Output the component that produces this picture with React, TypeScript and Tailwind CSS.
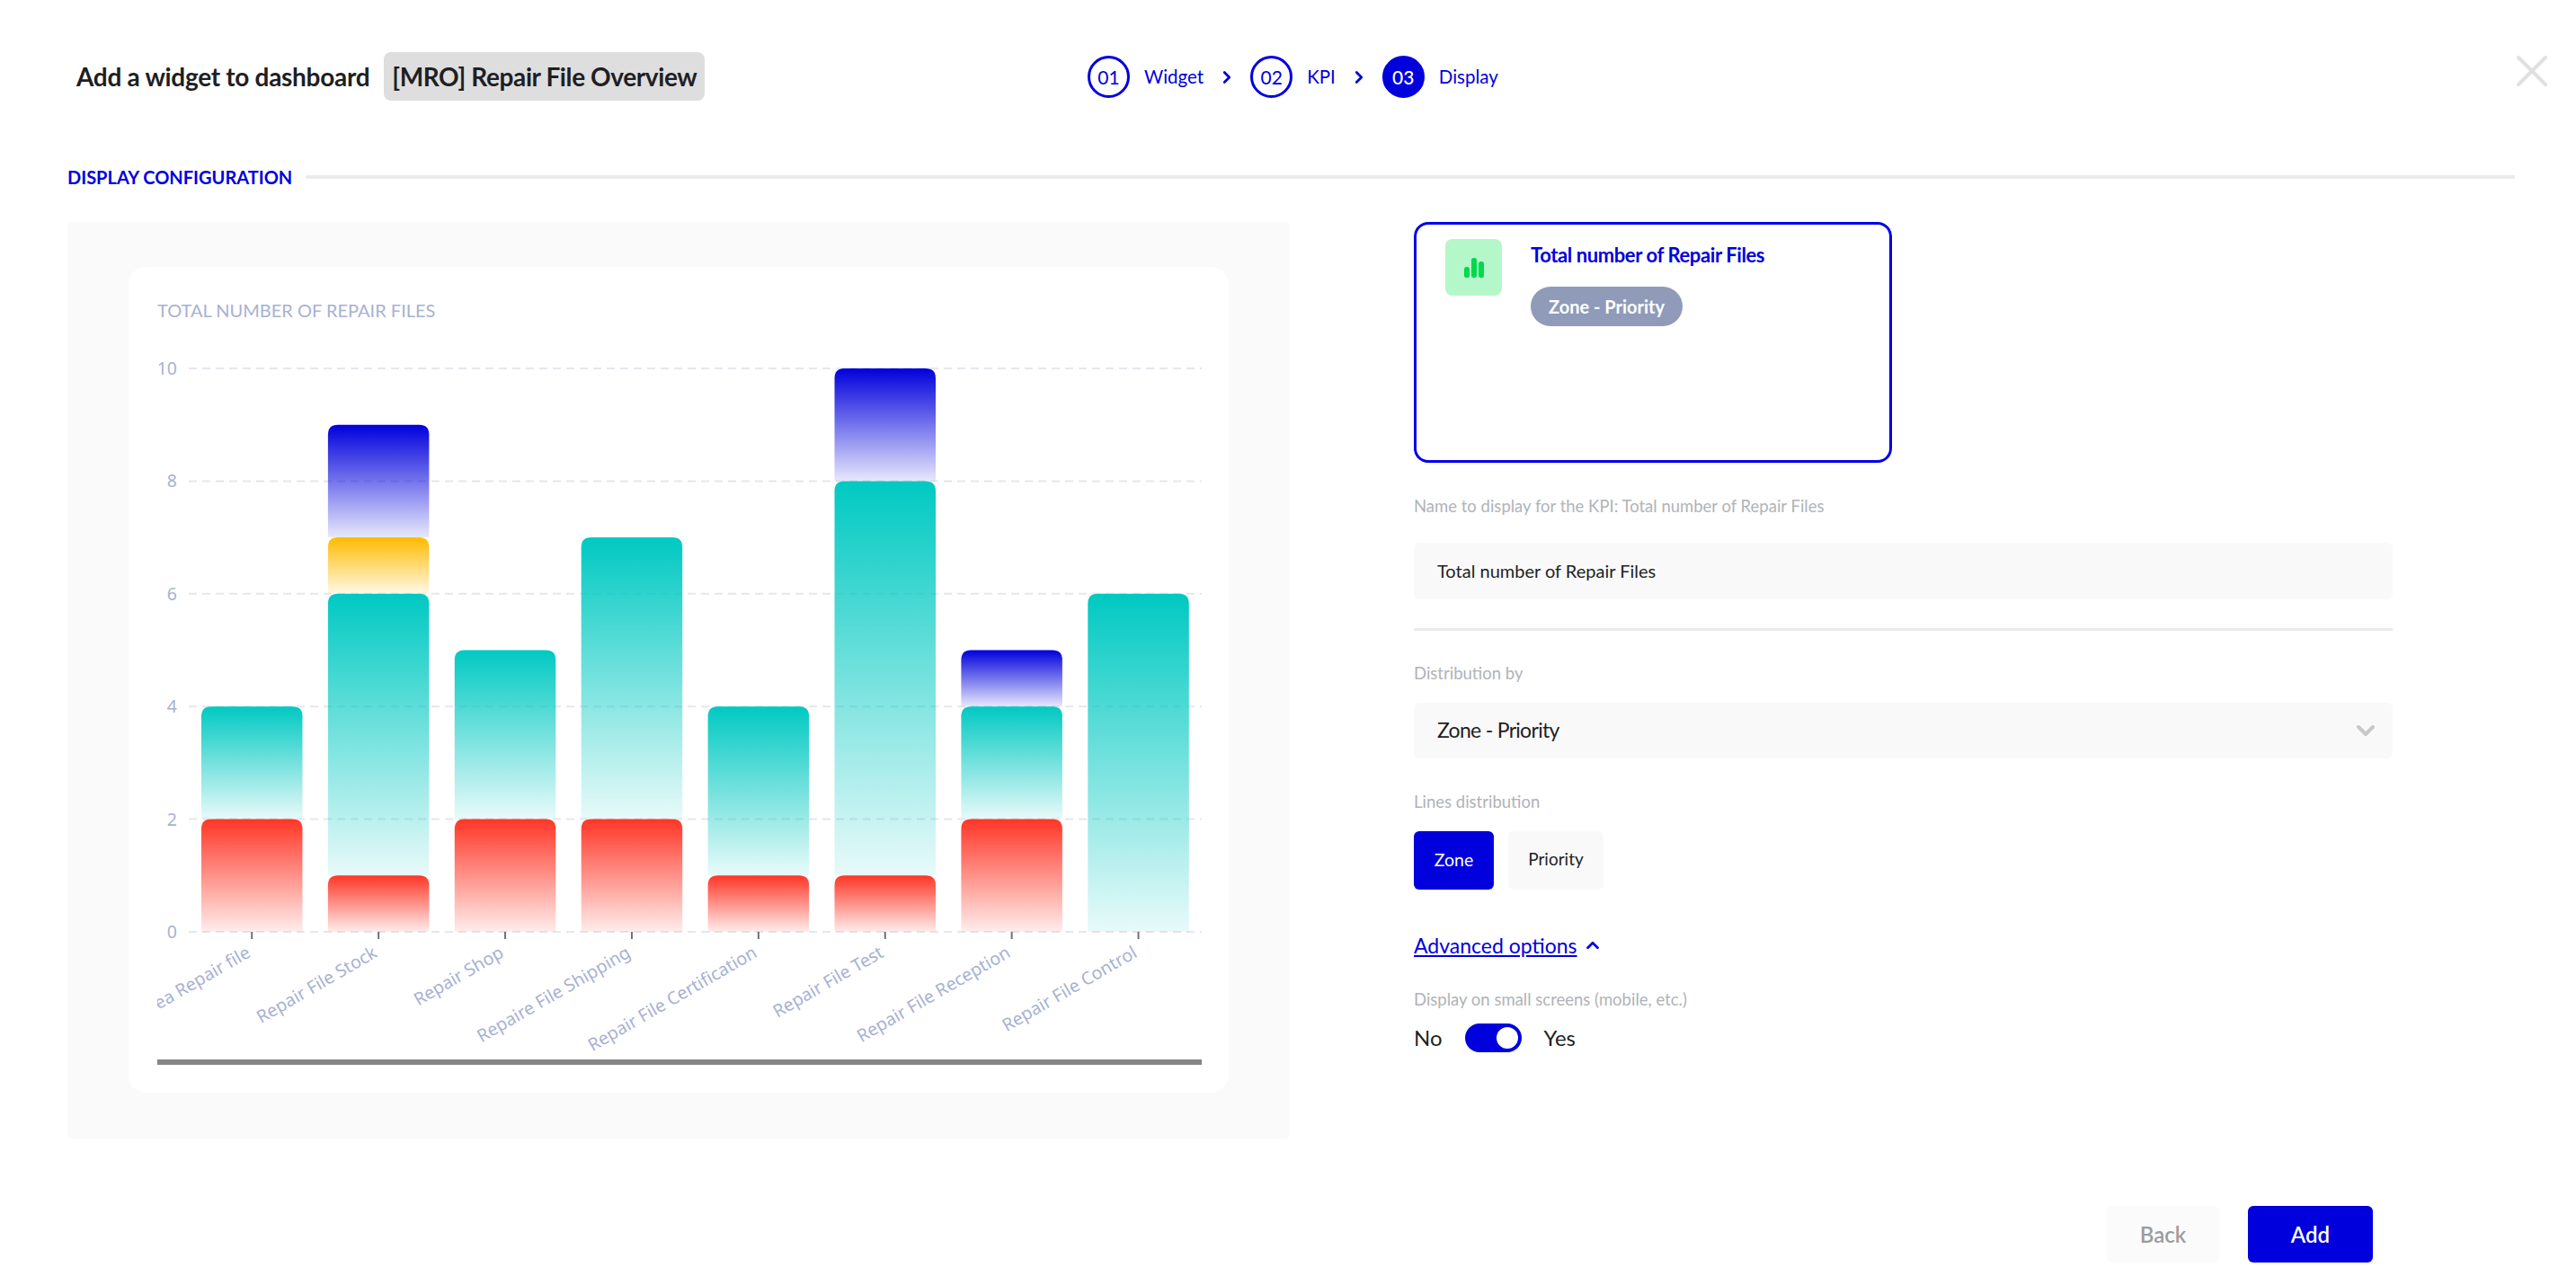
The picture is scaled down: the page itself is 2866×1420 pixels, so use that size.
import { ChevronDown, ChevronRight, ChevronUp, X } from "lucide-react";

type Segment = { color: "red" | "teal" | "yellow" | "blue"; from: number; to: number };

const BARS: { label: string; segments: Segment[] }[] = [
  { label: "Area Repair file", segments: [{ color: "red", from: 0, to: 2 }, { color: "teal", from: 2, to: 4 }] },
  {
    label: "Repair File Stock",
    segments: [
      { color: "red", from: 0, to: 1 },
      { color: "teal", from: 1, to: 6 },
      { color: "yellow", from: 6, to: 7 },
      { color: "blue", from: 7, to: 9 },
    ],
  },
  { label: "Repair Shop", segments: [{ color: "red", from: 0, to: 2 }, { color: "teal", from: 2, to: 5 }] },
  { label: "Repaire File Shipping", segments: [{ color: "red", from: 0, to: 2 }, { color: "teal", from: 2, to: 7 }] },
  { label: "Repair File Certification", segments: [{ color: "red", from: 0, to: 1 }, { color: "teal", from: 1, to: 4 }] },
  {
    label: "Repair File Test",
    segments: [
      { color: "red", from: 0, to: 1 },
      { color: "teal", from: 1, to: 8 },
      { color: "blue", from: 8, to: 10 },
    ],
  },
  {
    label: "Repair File Reception",
    segments: [
      { color: "red", from: 0, to: 2 },
      { color: "teal", from: 2, to: 4 },
      { color: "blue", from: 4, to: 5 },
    ],
  },
  { label: "Repair File Control", segments: [{ color: "teal", from: 0, to: 6 }] },
];

const GRADIENTS = { red: "#ff3626", teal: "#00c9c2", yellow: "#ffbb00", blue: "#0000dc" };

const yOf = (v: number) => 1037 - v * 62.7;
const barX = (i: number) => 224 + i * 140.9;

const segmentPath = (x: number, top: number, bottom: number) => {
  const w = 112.5;
  const r = 11;
  return `M${x} ${bottom}V${top + r}Q${x} ${top} ${x + r} ${top}H${x + w - r}Q${x + w} ${top} ${x + w} ${top + r}V${bottom}Z`;
};

const Chart = () => {
  return (
    <svg viewBox="143 390 1224 810" className="block w-[1224px] h-[810px]">
      <defs>
        {Object.entries(GRADIENTS).map(([name, color]) => (
          <linearGradient key={name} id={name} x1="0" y1="0" x2="0" y2="1">
            <stop offset="0" stopColor={color} stopOpacity="1" />
            <stop offset="1" stopColor={color} stopOpacity="0.09" />
          </linearGradient>
        ))}
        <clipPath id="labels">
          <rect x="175" y="1040" width="1180" height="135" />
        </clipPath>
      </defs>

      {[0, 2, 4, 6, 8, 10].map((v) => (
        <g key={v}>
          <line x1="210" x2="1337" y1={yOf(v)} y2={yOf(v)} stroke="#e6e7ec" strokeWidth="2" strokeDasharray="9 6" />
          <text
            x="197"
            y={yOf(v) + 7}
            textAnchor="end"
            fontSize="19.5"
            fill="#a8b1d3"
            fontFamily="'Noto Sans', sans-serif"
          >
            {v}
          </text>
        </g>
      ))}

      {BARS.map((bar, i) => (
        <g key={bar.label}>
          {bar.segments.map((s) => (
            <path key={s.color} d={segmentPath(barX(i), yOf(s.to), yOf(s.from))} fill={`url(#${s.color})`} />
          ))}
          <line x1={barX(i) + 56.25} x2={barX(i) + 56.25} y1="1037" y2="1045" stroke="#6e7079" strokeWidth="2" />
        </g>
      ))}

      <g clipPath="url(#labels)">
        {BARS.map((bar, i) => {
          const x = barX(i) + 56;
          return (
            <text
              key={bar.label}
              x={x}
              y="1064"
              textAnchor="end"
              fontSize="19.6"
              fill="#a8b1d3"
              fontFamily="'Noto Sans', sans-serif"
              transform={`rotate(-30 ${x} 1064)`}
            >
              {bar.label}
            </text>
          );
        })}
      </g>

      <rect x="175" y="1179" width="1162" height="6" fill="#868686" />
    </svg>
  );
};

const Step = ({ num, label, active }: { num: string; label: string; active?: boolean }) => {
  return (
    <div className="flex items-center gap-[16px]">
      <div
        className={
          active
            ? "flex h-[47px] w-[47px] items-center justify-center rounded-full border-[3px] border-[#0000dc] bg-[#0000dc] text-[21px] font-medium text-white"
            : "flex h-[47px] w-[47px] items-center justify-center rounded-full border-[3px] border-[#0000dc] text-[21px] text-[#0000dc]"
        }
      >
        {num}
      </div>
      <span className="text-[20.5px] text-[#0000dc]">{label}</span>
    </div>
  );
};

export default function App() {
  return (
    <div className="flex h-[1420px] w-[2866px] flex-col overflow-hidden bg-white font-['Lato',sans-serif] text-[#1e1f24]">
      {/* header */}
      <div className="flex h-[182px] items-start pt-[58px] pl-[85px] pr-[19px]">
        <div className="flex w-[1125px] items-center gap-[16px]">
          <h1 className="text-[28px] font-bold tracking-[-0.3px]">Add a widget to dashboard</h1>
          <span className="flex h-[54px] items-center rounded-[8px] bg-[#dedede] px-[9px] text-[28px] font-bold tracking-[-0.4px]">
            [MRO] Repair File Overview
          </span>
        </div>
        <div className="flex items-center pt-[4px]">
          <Step num="01" label="Widget" />
          <ChevronRight className="mx-[15px] h-[22px] w-[22px] text-[#0000dc]" strokeWidth={3} />
          <Step num="02" label="KPI" />
          <ChevronRight className="mx-[15px] h-[22px] w-[22px] text-[#0000dc]" strokeWidth={3} />
          <Step num="03" label="Display" active />
        </div>
        <X className="ml-auto -mt-[9px] h-[60px] w-[60px] text-[#e0e0e0]" strokeWidth={1.6} />
      </div>

      {/* section title */}
      <div className="flex h-[65px] items-start pl-[75px] pr-[68px]">
        <div className="flex w-full items-center gap-[15px]">
          <span className="text-[20px] font-bold uppercase text-[#0000dc]">Display configuration</span>
          <div className="h-[4px] flex-1 bg-[#ebebeb]" />
        </div>
      </div>

      <div className="flex items-start pl-[75px]">
        {/* preview panel */}
        <div className="h-[1020px] w-[1360px] rounded-[6px] bg-[#fafafa] px-[68px] pt-[50px]">
          <div className="h-[919px] w-[1224px] rounded-[20px] bg-white">
            <div className="h-[93px] pt-[33px] pl-[32px] text-[20px] uppercase text-[#a8b1d3]">
              Total number of Repair Files
            </div>
            <Chart />
          </div>
        </div>

        {/* config form */}
        <div className="ml-[138px] flex w-[1089px] flex-col">
          <div className="flex h-[268px] w-[532px] gap-[32px] rounded-[16px] border-[3px] border-[#0000e6] pt-[16px] pl-[32px]">
            <div className="flex h-[63px] w-[63px] items-center justify-center rounded-[8px] bg-[#b4f7c9]">
              <svg width="22" height="22" viewBox="0 0 22 22" fill="#00d94f">
                <rect x="0" y="10" width="6" height="12" rx="2.5" />
                <rect x="8" y="0" width="6" height="22" rx="2.5" />
                <rect x="16" y="4" width="6" height="18" rx="2.5" />
              </svg>
            </div>
            <div className="flex flex-col items-start">
              <span className="pt-[3px] text-[22px] font-bold leading-[30px] tracking-[-0.4px] text-[#0000dc]">
                Total number of Repair Files
              </span>
              <span className="mt-[20px] flex h-[44px] items-center rounded-full bg-[#8f9bb9] px-[20px] text-[20px] font-bold text-white">
                Zone - Priority
              </span>
            </div>
          </div>

          <label className="mt-[36px] text-[18.5px] leading-[24px] text-[#b0b3b8]">
            Name to display for the KPI: Total number of Repair Files
          </label>
          <div className="mt-[29px] flex h-[63px] items-center rounded-[6px] bg-[#f9f9f9] pb-[2px] pl-[26px] text-[20px]">
            Total number of Repair Files
          </div>
          <div className="mt-[32px] h-[3px] bg-[#ebebeb]" />

          <label className="mt-[35px] text-[18.5px] leading-[24px] text-[#b0b3b8]">Distribution by</label>
          <div className="mt-[21px] flex h-[62px] items-center justify-between rounded-[6px] bg-[#f9f9f9] pb-[2px] pl-[26px] pr-[14px] text-[23px] tracking-[-0.7px]">
            Zone - Priority
            <ChevronDown className="mt-[2px] h-[32px] w-[32px] text-[#c8c8c8]" strokeWidth={3} />
          </div>

          <label className="mt-[36px] text-[18.5px] leading-[24px] text-[#b0b3b8]">Lines distribution</label>
          <div className="mt-[21px] flex gap-[16px]">
            <button className="h-[65px] w-[89px] rounded-[6px] bg-[#0000dc] pb-[2px] text-[19.5px] text-white">Zone</button>
            <button className="h-[65px] w-[106px] rounded-[6px] bg-[#f9f9f9] pb-[2px] text-[19px]">Priority</button>
          </div>

          <div className="mt-[46px] flex items-center gap-[6px] text-[#0000dc]">
            <span className="text-[23px] leading-[32px] underline">Advanced options</span>
            <ChevronUp className="h-[22px] w-[22px]" strokeWidth={3} />
          </div>

          <label className="pt-[32px] text-[18.5px] leading-[24px] text-[#b0b3b8]">
            Display on small screens (mobile, etc.)
          </label>
          <div className="mt-[13px] flex items-center gap-[25px] text-[24px]">
            <span>No</span>
            <div className="flex h-[32px] w-[63px] items-center justify-end rounded-full bg-[#0000dc] pr-[4px]">
              <div className="h-[24px] w-[24px] rounded-full bg-white" />
            </div>
            <span>Yes</span>
          </div>
        </div>
      </div>

      {/* footer */}
      <div className="flex justify-end gap-[32px] pr-[226px] pt-[75px]">
        <button className="h-[63px] w-[125px] rounded-[6px] bg-[#fbfbfb] text-[24px] font-semibold text-[#9c9c9c]">
          Back
        </button>
        <button className="h-[63px] w-[139px] rounded-[6px] bg-[#0000dc] text-[24px] font-semibold text-white">
          Add
        </button>
      </div>
    </div>
  );
}
